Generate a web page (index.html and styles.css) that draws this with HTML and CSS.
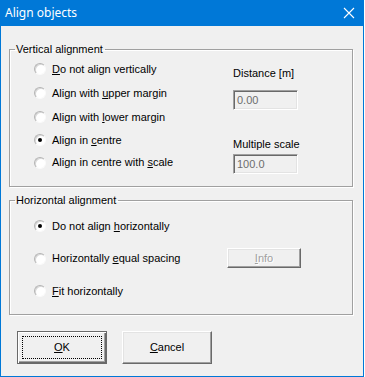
FILE: index.html
```html
<!DOCTYPE html>
<html lang="en">
<head>
    <meta charset="UTF-8">
    <title>Align objects</title>
    <link rel="stylesheet" href="styles.css">
</head>
<body>
<div class="window">
    <div class="titlebar">
        <span class="title">Align objects</span>
        <svg class="close" width="12" height="12" viewBox="0 0 12 12">
            <path d="M1 1 L11 11 M11 1 L1 11" stroke="#fff" stroke-width="1.1" fill="none"/>
        </svg>
    </div>

    <div class="content">
        <fieldset class="group group-vertical">
            <legend>Vertical alignment</legend>
            <div class="group-body">
                <div class="options options-vertical">
                    <div class="option"><span class="radio"></span><span><u>D</u>o not align vertically</span></div>
                    <div class="option"><span class="radio"></span><span>Align with <u>u</u>pper margin</span></div>
                    <div class="option"><span class="radio"></span><span>Align with <u>l</u>ower margin</span></div>
                    <div class="option"><span class="radio checked"></span><span>Align in <u>c</u>entre</span></div>
                    <div class="option"><span class="radio"></span><span>Align in centre with <u>s</u>cale</span></div>
                </div>
                <div class="side">
                    <div class="field-label first">Distance [m]</div>
                    <div class="textbox">0.00</div>
                    <div class="field-label second">Multiple scale</div>
                    <div class="textbox textbox-scale">100.0</div>
                </div>
            </div>
        </fieldset>

        <fieldset class="group group-horizontal">
            <legend>Horizontal alignment</legend>
            <div class="group-body group-body-h">
                <div class="options options-horizontal">
                    <div class="option"><span class="radio checked"></span><span>Do not align <u>h</u>orizontally</span></div>
                    <div class="option"><span class="radio"></span><span>Horizontally <u>e</u>qual spacing</span></div>
                    <div class="option"><span class="radio"></span><span><u>F</u>it horizontally</span></div>
                </div>
                <div class="side-h">
                    <div class="btn btn-info"><span><u>I</u>nfo</span></div>
                </div>
            </div>
        </fieldset>

        <div class="buttons">
            <div class="btn btn-default"><span class="focus"><u>O</u>K</span></div>
            <div class="btn btn-dialog"><span><u>C</u>ancel</span></div>
        </div>
    </div>
</div>
</body>
</html>
```

FILE: styles.css
```css
body {
    margin: 0;
    padding: 0;
    background: #ffffff;
    font-family: "Liberation Sans", Arial, sans-serif;
    font-size: 11px;
    line-height: 13px;
    color: #000;
}

.window {
    width: 364px;
    height: 377px;
    box-sizing: border-box;
    background: #f0f0f0;
    border: 1px solid #0078d7;
    border-top: none;
}

/* title bar */
.titlebar {
    height: 26px;
    margin: 0 -1px;
    padding: 0 9px 0 5px;
    background: #0078d7;
    display: flex;
    align-items: center;
    justify-content: space-between;
}

.title {
    font-family: "Noto Sans", sans-serif;
    font-size: 12px;
    color: #fff;
    margin-top: -1px;
}

.close {
    display: block;
}

.content {
    padding: 0 0 0 8px;
}

/* group boxes */
.group {
    width: 344px;
    box-sizing: border-box;
    margin: 0;
    padding: 0;
    border: 1px solid #a0a0a0;
    box-shadow: 1px 1px 0 #fff, inset 1px 1px 0 #fff;
}

.group legend {
    margin-left: 5px;
    padding: 0 2px 0 1px;
    line-height: 13px;
}

.group-vertical {
    margin-top: 17px;
    padding-bottom: 12px;
}

.group-horizontal {
    margin-top: 7px;
    padding-bottom: 7px;
}

.group-body {
    display: grid;
    grid-template-columns: 199px 1fr;
    padding-left: 24px;
}

.group-body-h {
    grid-template-columns: 193px 1fr;
}

.options-vertical {
    display: grid;
    grid-template-rows: 24px 24px 24px 22px 23px;
    padding-top: 1px;
}

.options-horizontal {
    display: grid;
    grid-template-rows: 32px 33px 32px;
    padding-top: 3px;
}

.option {
    display: flex;
    align-items: center;
    gap: 6px;
    white-space: nowrap;
}

/* radio buttons */
.radio {
    position: relative;
    width: 12px;
    height: 12px;
    box-sizing: border-box;
    border-radius: 50%;
    border: 1px solid;
    border-color: #b4b4b4 #fafafa #fafafa #b4b4b4;
    background: #fff;
    box-shadow: inset 1px 1px 0 #d8d8d8;
    flex: none;
}

.radio.checked::after {
    content: "";
    position: absolute;
    left: 3px;
    top: 3px;
    width: 4px;
    height: 4px;
    border-radius: 50%;
    background: #000;
}

/* right side of vertical group */
.field-label.first {
    margin-top: 11px;
}

.field-label.second {
    margin-top: 28px;
}

.textbox {
    width: 65px;
    height: 20px;
    box-sizing: border-box;
    margin-top: 10px;
    padding: 2px 3px;
    border: 1px solid;
    border-color: #a0a0a0 #fff #fff #a0a0a0;
    box-shadow: inset 1px 1px 0 #696969, inset -1px -1px 0 #e3e3e3;
    background: #f0f0f0;
    color: #6d6d6d;
    line-height: 14px;
}

.textbox-scale {
    margin-top: 3px;
}

/* buttons */
.side-h {
    padding-top: 41px;
}

.btn {
    display: flex;
    align-items: center;
    justify-content: center;
    box-sizing: border-box;
    border: 1px solid;
    border-color: #fff #696969 #696969 #fff;
    box-shadow: inset -1px -1px 0 #a0a0a0, inset 1px 1px 0 #e3e3e3;
    background: #f0f0f0;
}

.btn-info {
    width: 74px;
    height: 20px;
    color: #a0a0a0;
    text-shadow: 1px 1px 0 #fff;
}

.buttons {
    display: flex;
    gap: 15px;
    margin-top: 16px;
    margin-left: 8px;
}

.btn-dialog {
    width: 90px;
    height: 33px;
}

.btn-default {
    width: 90px;
    height: 33px;
    border: 1px solid #696969;
    box-shadow: inset 1px 1px 0 #fff, inset -1px -1px 0 #696969, inset -2px -2px 0 #a0a0a0;
}

.focus {
    width: 80px;
    height: 23px;
    box-sizing: border-box;
    border: 1px dotted #000;
    display: flex;
    align-items: center;
    justify-content: center;
}
```
